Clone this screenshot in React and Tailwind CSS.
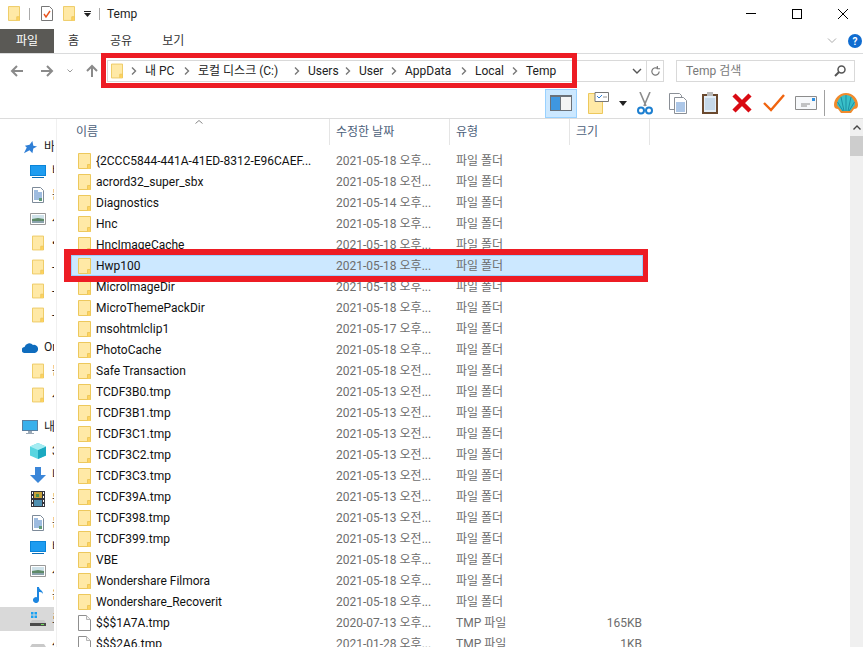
import React from 'react'

const font = "font-['Roboto','Noto_Sans_CJK_KR',sans-serif]"

const files = [
  ['{2CCC5844-441A-41ED-8312-E96CAEF...', '2021-05-18 오후...'],
  ['acrord32_super_sbx', '2021-05-18 오전...'],
  ['Diagnostics', '2021-05-14 오후...'],
  ['Hnc', '2021-05-18 오후...'],
  ['HncImageCache', '2021-05-18 오후...'],
  ['Hwp100', '2021-05-18 오후...'],
  ['MicroImageDir', '2021-05-18 오후...'],
  ['MicroThemePackDir', '2021-05-18 오후...'],
  ['msohtmlclip1', '2021-05-17 오후...'],
  ['PhotoCache', '2021-05-18 오후...'],
  ['Safe Transaction', '2021-05-18 오전...'],
  ['TCDF3B0.tmp', '2021-05-13 오전...'],
  ['TCDF3B1.tmp', '2021-05-13 오전...'],
  ['TCDF3C1.tmp', '2021-05-13 오전...'],
  ['TCDF3C2.tmp', '2021-05-13 오전...'],
  ['TCDF3C3.tmp', '2021-05-13 오전...'],
  ['TCDF39A.tmp', '2021-05-13 오전...'],
  ['TCDF398.tmp', '2021-05-13 오전...'],
  ['TCDF399.tmp', '2021-05-13 오전...'],
  ['VBE', '2021-05-18 오후...'],
  ['Wondershare Filmora', '2021-05-18 오후...'],
  ['Wondershare_Recoverit', '2021-05-18 오후...'],
  ['$$$1A7A.tmp', '2020-07-13 오후...', 'TMP 파일', '165KB'],
  ['$$$2A6.tmp', '2021-01-28 오후...', 'TMP 파일', '1KB'],
]

const crumbs = [
  ['내 PC', 'w-[31px]'],
  ['로컬 디스크 (C:)', 'w-[88px]'],
  ['Users', 'w-[29px]'],
  ['User', 'w-[24px]'],
  ['AppData', 'w-[48px]'],
  ['Local', 'w-[29px]'],
  ['Temp', 'w-[30px]'],
]

function Folder({ className = 'w-[13px] h-[16px]' }) {
  return (
    <svg viewBox="0 0 13 16" className={className}>
      <path d="M.5.5h12v15H.5z" fill="#ffe9a6" stroke="#edc85c" />
      <path d="M9.5 15.5v-4h3v4" fill="#ffd35f" stroke="#edc85c" />
    </svg>
  )
}

function FileIcon() {
  return (
    <svg viewBox="0 0 13 16" className="w-[13px] h-[16px]">
      <path d="M.5.5h8l4 4v11H.5z" fill="#fff" stroke="#8f8f8f" />
      <path d="M8.5.5v4h4" fill="#f2f2f2" stroke="#b5b5b5" />
    </svg>
  )
}

function Desktop() {
  return (
    <svg viewBox="0 0 16 14" className="w-[16px] h-[14px]">
      <path d="M0 1h16v11H0z" fill="#0a84d8" />
      <path d="M1 2h14v9H1z" fill="#1e9cf0" />
      <path d="M2 13h12v1H2z" fill="#0a6cb5" />
    </svg>
  )
}

function Doc() {
  return (
    <svg viewBox="0 0 12 16" className="w-[12px] h-[16px]">
      <path d="M.5.5h8l3 3v12H.5z" fill="#fff" stroke="#7d8a99" />
      <path d="M2 4h4M2 6h8M2 8h8M2 10h8M2 12h5" stroke="#3d78c0" />
      <path d="M7 11h3v3H7z" fill="#5f9a78" />
    </svg>
  )
}

function Picture() {
  return (
    <svg viewBox="0 0 16 12" className="w-[16px] h-[12px]">
      <path d="M.5.5h15v11H.5z" fill="#fff" stroke="#999" />
      <path d="M2 2h12v4H2z" fill="#cfe2ea" />
      <path d="M2 6l6-1 6 1v2H2z" fill="#5e8a68" />
      <path d="M2 8h12v2H2z" fill="#8ba3ad" />
    </svg>
  )
}

function Drive({ win }) {
  return (
    <svg viewBox="0 0 16 14" className="w-[16px] h-[14px]">
      {win && <path d="M1 0h2.500v2.500H1zM4.500 0H7v2.500H4.500zM1 3.500h2.500V6H1zM4.500 3.500H7V6H4.500z" fill="#1ba1f2" />}
      <path d="M2 8h12l2 3v3H0v-3z" fill="#c9c9c9" />
      <path d="M0 11h16v3H0z" fill="#4b4b4b" />
      <path d="M11 12h3v1h-3z" fill="#6fdc5a" />
    </svg>
  )
}

function SideRow({ icon, text, child, active }) {
  return (
    <div className={`h-[24px] flex items-center overflow-hidden whitespace-nowrap text-[12px] text-[#1a1a1a] ${active ? 'bg-[#d9d9d9]' : ''}`}>
      <div className={`flex justify-center shrink-0 w-[16px] mr-[6px] ${child ? 'ml-[30px]' : 'ml-[22px]'}`}>{icon}</div>
      <span>{text}</span>
    </div>
  )
}

function Sidebar() {
  const small = 'w-[12px] h-[16px]'
  return (
    <div className="w-[54px] shrink-0 pt-[16px] overflow-hidden">
      <SideRow text="바로 가기" icon={
        <svg viewBox="0 0 16 16" className="w-[15px] h-[15px]"><path d="M10 1l1 5 4 1-4 2-1 5-3-3-6 3 3-6-2-2 5-1z" fill="#2f7fd6" /></svg>
      } />
      <SideRow child text="바탕 화면" icon={<Desktop />} />
      <SideRow child text="문서" icon={<Doc />} />
      <SideRow child text="사진" icon={<Picture />} />
      <SideRow child text="•" icon={<Folder className={small} />} />
      <SideRow child text="- 폴더" icon={<Folder className={small} />} />
      <SideRow child text="- 폴더" icon={<Folder className={small} />} />
      <SideRow child text="- 폴더" icon={<Folder className={small} />} />
      <div className="h-[8px]" />
      <SideRow text="OneDrive" icon={
        <svg viewBox="0 0 16 11" className="w-[16px] h-[11px]"><path d="M3 11a3 3 0 0 1-.500-6A5 5 0 0 1 11 3a3.500 3.500 0 0 1 2 8z" fill="#0f6cbd" /></svg>
      } />
      <SideRow child text="문서" icon={<Folder className={small} />} />
      <SideRow child text="사진" icon={<Folder className={small} />} />
      <div className="h-[8px]" />
      <SideRow text="내 PC" icon={
        <svg viewBox="0 0 16 15" className="w-[16px] h-[15px]"><path d="M0 0h16v11H0z" fill="#5a7fa0" /><path d="M1 1h14v9H1z" fill="#38b0ec" /><path d="M6 11h4v2H6zM4 13h8v1H4z" fill="#9aa8b5" /></svg>
      } />
      <SideRow child text="3D 개체" icon={
        <svg viewBox="0 0 16 16" className="w-[16px] h-[16px]"><path d="M8 0l8 3.500v9L8 16l-8-3.500v-9z" fill="#58d5e0" /><path d="M8 7l8-3.500v9L8 16z" fill="#1ba9c0" /><path d="M8 0l8 3.500L8 7 0 3.500z" fill="#a5ecf2" /></svg>
      } />
      <SideRow child text="다운로드" icon={
        <svg viewBox="0 0 16 16" className="w-[16px] h-[16px]"><path d="M5 0h6v8h5l-8 8-8-8h5z" fill="#3b86d8" /></svg>
      } />
      <SideRow child text="동영상" icon={
        <svg viewBox="0 0 14 16" className="w-[14px] h-[16px]">
          <path d="M0 0h14v16H0z" fill="#33343c" />
          <path d="M1 1h1v2H1zM1 5h1v2H1zM1 9h1v2H1zM1 13h1v2H1zM12 1h1v2h-1zM12 5h1v2h-1zM12 9h1v2h-1zM12 13h1v2h-1z" fill="#fff" />
          <path d="M3 1h8v6H3z" fill="#c7a23a" />
          <path d="M3 9h8v6H3z" fill="#4f8fb0" />
          <path d="M5 3h3v3H5z" fill="#4f8f4a" />
        </svg>
      } />
      <SideRow child text="문서" icon={<Doc />} />
      <SideRow child text="바탕 화면" icon={<Desktop />} />
      <SideRow child text="사진" icon={<Picture />} />
      <SideRow child text="음악" icon={
        <svg viewBox="0 0 12 16" className="w-[12px] h-[16px]"><path d="M5 0h2c0 3 4 3 4 7-1-2-3-2-4-2v8a3 3 0 1 1-2-2.800z" fill="#1d86e0" /></svg>
      } />
      <SideRow active child text="로컬 디스크" icon={<Drive win />} />
      <SideRow child text="새 볼륨" icon={<Drive />} />
    </div>
  )
}

function FileRow({ name, date, type = '파일 폴더', size }) {
  const selected = name === 'Hwp100'
  return (
    <div className={`h-[21px] ml-[14px] w-[572px] flex items-center whitespace-nowrap text-[12px] border ${selected ? 'bg-[#cce8ff] border-[#99d1ff]' : 'border-transparent'}`}>
      <div className="w-[24px] pl-[6px] shrink-0">{size ? <FileIcon /> : <Folder />}</div>
      <div className="w-[240px] shrink-0 text-[#111] overflow-hidden">{name}</div>
      <div className="w-[120px] shrink-0 text-[#6d6d6d] overflow-hidden">{date}</div>
      <div className="w-[110px] shrink-0 text-[#6d6d6d]">{type}</div>
      <div className="w-[76px] shrink-0 text-right text-[#6d6d6d]">{size}</div>
    </div>
  )
}

function HeaderCell({ label, className }) {
  return <div className={`h-[26px] pl-[6px] flex items-center text-[12px] text-[#4c607a] border-r border-[#e5e5e5] ${className}`}>{label}</div>
}

function Crumb() {
  return (
    <svg viewBox="0 0 6 8" className="w-[6px] h-[8px] mx-[8px] shrink-0"><path d="M1 .5L4.500 4 1 7.500" fill="none" stroke="#777" strokeWidth="1.400" /></svg>
  )
}

function NavArrow({ d, className }) {
  return (
    <svg viewBox="0 0 14 14" className={`w-[14px] h-[14px] shrink-0 ${className}`}>
      <path d={d} fill="none" stroke="#8a8a8a" strokeWidth="2" />
    </svg>
  )
}

function Toolbar() {
  return (
    <div className="h-[31px] flex items-center border-b border-[#dcdcdc] pl-[545px]">
      <div className="w-[32px] h-[29px] bg-[#cce8ff] border border-[#99d1ff] flex items-center justify-center">
        <svg viewBox="0 0 22 16" className="w-[22px] h-[16px]">
          <path d="M0 0h22v16H0z" fill="#6b7178" />
          <path d="M1 2h9v13H1z" fill="#3f97e0" />
          <path d="M11 2h10v13H11z" fill="#f4f4f4" />
        </svg>
      </div>
      <svg viewBox="0 0 21 22" className="w-[21px] h-[22px] ml-[11px]">
        <path d="M.5 1.500h14v20H.5z" fill="#ffe9a6" stroke="#edc85c" />
        <path d="M7 .5h13.500v9H7z" fill="#fff" stroke="#777" />
        <path d="M9 4l2 2 3-3" fill="none" stroke="#2f7fd6" />
        <path d="M15 5h4" stroke="#999" />
      </svg>
      <svg viewBox="0 0 8 5" className="w-[8px] h-[5px] ml-[10px]"><path d="M0 0h8L4 5z" fill="#222" /></svg>
      <svg viewBox="0 0 16 23" className="w-[16px] h-[23px] ml-[10px]">
        <path d="M3 0l6 14M13 0L7 14" stroke="#8c8c8c" strokeWidth="1.600" />
        <circle cx="4" cy="18.500" r="3" fill="none" stroke="#1d7fd0" strokeWidth="2" />
        <circle cx="12" cy="18.500" r="3" fill="none" stroke="#1d7fd0" strokeWidth="2" />
      </svg>
      <svg viewBox="0 0 18 21" className="w-[18px] h-[21px] ml-[16px]">
        <path d="M.5.500h10l2 2v14H.5z" fill="#fff" stroke="#8a8f96" />
        <path d="M5.500 4.500h9l3 3v13h-12z" fill="#fff" stroke="#8a8f96" />
        <path d="M7 10h9M7 12h9M7 14h9M7 16h9M7 18h9" stroke="#5b8fd0" />
      </svg>
      <svg viewBox="0 0 16 22" className="w-[16px] h-[22px] ml-[15px]">
        <path d="M0 2h16v20H0z" fill="#6b4a2f" />
        <path d="M2 4h12v16H2z" fill="#e3eef7" />
        <path d="M3 7h10M3 9h10M3 11h10M3 13h10M3 15h10M3 17h10" stroke="#a9c4dc" />
        <path d="M5 0h6v4H5z" fill="#b9b9b9" />
      </svg>
      <svg viewBox="0 0 20 20" className="w-[20px] h-[20px] ml-[14px]">
        <path d="M2 2l16 16M18 2L2 18" stroke="#d90a12" strokeWidth="4.500" />
      </svg>
      <svg viewBox="0 0 22 18" className="w-[22px] h-[18px] ml-[11px]">
        <path d="M1 9l7 7L21 1" fill="none" stroke="#f0640f" strokeWidth="2.400" />
      </svg>
      <svg viewBox="0 0 22 14" className="w-[22px] h-[14px] ml-[10px]">
        <path d="M.5.500h21v13H.5z" fill="#f7f9fb" stroke="#8c8c8c" />
        <path d="M17 2h3v3h-3z" fill="#2f8fe0" />
        <path d="M6 8h9M6 10h6" stroke="#8c8c8c" />
      </svg>
      <div className="w-px h-[26px] bg-[#a0a0a0] ml-[7px]" />
      <svg viewBox="0 0 24 23" className="w-[24px] h-[23px] ml-[9px]">
        <path d="M12 1C5 1 0 7 0 13c0 3 2 4 4 4l3 4h10l3-4c2 0 4-1 4-4 0-6-5-12-12-12z" fill="#f08a2c" />
        <path d="M12 3C7 3 3 8 3 13l5 6h8l5-6c0-5-4-10-9-10z" fill="#39c0c8" />
        <path d="M12 3v16M7 5l3 14M17 5l-3 14M3.500 10L9 19M20.500 10L15 19" stroke="#1c8fa3" />
      </svg>
    </div>
  )
}

export default function App() {
  return (
    <div className={`relative w-[863px] h-[647px] overflow-hidden bg-white ${font}`}>
      {/* title bar */}
      <div className="h-[29px] flex items-center pb-[2px] pl-[8px] text-[12px] text-[#222]">
        <Folder className="w-[12px] h-[15px]" />
        <div className="w-px h-[12px] bg-[#aaa] ml-[9px]" />
        <svg viewBox="0 0 12 15" className="w-[12px] h-[15px] ml-[11px]">
          <path d="M.5.500h8l3 3v11H.5z" fill="#fff" stroke="#777" />
          <path d="M3 8l2 3 4-6" fill="none" stroke="#e8541e" strokeWidth="1.400" />
        </svg>
        <Folder className="w-[12px] h-[15px] ml-[10px]" />
        <svg viewBox="0 0 7 6" className="w-[7px] h-[6px] ml-[9px]"><path d="M0 0h7v1H0zM0 2h7L3.500 6z" fill="#222" /></svg>
        <div className="w-px h-[12px] bg-[#aaa] ml-[8px]" />
        <span className="ml-[7px]">Temp</span>
        <div className="ml-auto -mr-[3px] flex items-center">
          <div className="w-[46px] h-[14px] flex justify-center items-center"><div className="w-[10px] h-px bg-black" /></div>
          <div className="w-[46px] flex justify-center"><div className="w-[10px] h-[10px] border border-black" /></div>
          <div className="w-[46px] flex justify-center">
            <svg viewBox="0 0 10 10" className="w-[10px] h-[10px]"><path d="M0 0l10 10M10 0L0 10" stroke="#000" /></svg>
          </div>
        </div>
      </div>

      {/* ribbon tabs */}
      <div className="h-[25px] flex items-center border-b border-[#dadbdc] text-[12px] text-[#333]">
        <div className="w-[54px] h-[24px] bg-[#5a5955] text-white flex items-center justify-center">파일</div>
        <span className="ml-[14px]">홈</span>
        <span className="ml-[31px]">공유</span>
        <span className="ml-[30px]">보기</span>
        <svg viewBox="0 0 10 6" className="w-[10px] h-[6px] ml-auto"><path d="M1 .5l4 4 4-4" fill="none" stroke="#aaa" /></svg>
        <div className="w-[14px] h-[14px] rounded-full bg-[#0f6cd0] text-white text-[10px] font-bold flex items-center justify-center ml-[11px] mr-[1px]">?</div>
      </div>

      {/* address bar */}
      <div className="h-[34px] flex items-center">
        <NavArrow className="ml-[10px]" d="M13 7H2M7 2L2 7l5 5" />
        <NavArrow className="ml-[16px]" d="M1 7h11M7 2l5 5-5 5" />
        <svg viewBox="0 0 6 4" className="w-[6px] h-[4px] ml-[13px]"><path d="M.5.500L3 3 5.500.500" fill="none" stroke="#999" /></svg>
        <NavArrow className="ml-[12px]" d="M7 13V2M2 7l5-5 5 5" />
        <div className="ml-[8px] w-[557px] h-[22px] border border-[#d9d9d9] flex items-center text-[12px] text-[#222]">
          <Folder className="w-[12px] h-[16px] ml-[3px] shrink-0" />
          <svg viewBox="0 0 6 8" className="w-[6px] h-[8px] ml-[8px] mr-[8px] shrink-0"><path d="M1 .5L4.500 4 1 7.500" fill="none" stroke="#777" strokeWidth="1.400" /></svg>
          {crumbs.map(([text, w], i) => (
            <React.Fragment key={text}>
              <span className={`${w} whitespace-nowrap`}>{text}</span>
              {i < crumbs.length - 1 && <Crumb />}
            </React.Fragment>
          ))}
          <svg viewBox="0 0 10 6" className="w-[10px] h-[6px] ml-auto mr-[4px]"><path d="M1 1l4 4 4-4" fill="none" stroke="#555" strokeWidth="1.400" /></svg>
          <div className="w-[17px] h-full border-l border-[#d9d9d9] flex items-center justify-center shrink-0">
            <svg viewBox="0 0 12 12" className="w-[11px] h-[11px]"><path d="M10 6a4 4 0 1 1-2-3.500M8 0v3h3" fill="none" stroke="#777" strokeWidth="1.300" /></svg>
          </div>
        </div>
        <div className="ml-[12px] w-[179px] h-[22px] border border-[#d9d9d9] flex items-center pl-[9px] pr-[8px] text-[12px] text-[#7a7a7a]">
          Temp 검색
          <svg viewBox="0 0 12 12" className="w-[12px] h-[12px] ml-auto"><circle cx="7.500" cy="4.500" r="3.500" fill="none" stroke="#555" strokeWidth="1.500" /><path d="M5 7l-4 4" stroke="#555" strokeWidth="2" /></svg>
        </div>
      </div>

      <Toolbar />

      {/* sidebar and list */}
      <div className="flex h-[529px]">
        <Sidebar />
        <div className="w-[3px] shrink-0 border-r border-[#f0f0f0]" />
        <div className="flex-1 relative overflow-hidden">
          <div className="flex">
            <HeaderCell label="이름" className="w-[273px] pl-[19px]" />
            <HeaderCell label="수정한 날짜" className="w-[120px]" />
            <HeaderCell label="유형" className="w-[120px]" />
            <HeaderCell label="크기" className="w-[80px]" />
          </div>
          <svg viewBox="0 0 8 4" className="absolute left-[138px] top-[1px] w-[8px] h-[4px]"><path d="M.5 3.500L4 .5l3.500 3" fill="none" stroke="#888" /></svg>
          <div className="pt-[5px]">
            {files.map(([name, date, type, size]) => (
              <FileRow key={name} name={name} date={date} type={type} size={size} />
            ))}
          </div>
        </div>
        <div className="w-[13px] shrink-0 bg-[#f0f0f0] flex flex-col">
          <div className="h-[17px] flex items-center justify-center">
            <svg viewBox="0 0 8 5" className="w-[8px] h-[5px]"><path d="M.5 4.500L4 1l3.500 3.500" fill="none" stroke="#444" strokeWidth="1.400" /></svg>
          </div>
          <div className="h-[20px] bg-[#cdcdcd]" />
        </div>
      </div>

      {/* red annotation boxes */}
      <div className="absolute left-[101px] top-[53px] w-[476px] h-[35px] border-[5px] border-[#ed1c24]" />
      <div className="absolute left-[64px] top-[249px] w-[584px] h-[33px] border-[6px] border-l-[7px] border-r-[5px] border-[#ed1c24]" />
    </div>
  )
}
